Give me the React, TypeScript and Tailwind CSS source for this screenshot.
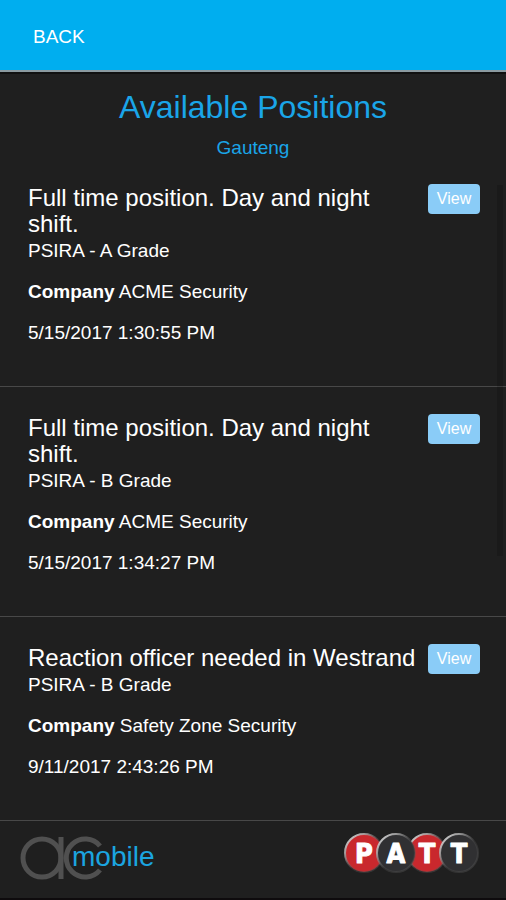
import React from "react";

type Position = {
  title: string;
  grade: string;
  company: string;
  posted: string;
};

const positions: Position[] = [
  {
    title: "Full time position. Day and night shift.",
    grade: "PSIRA - A Grade",
    company: "ACME Security",
    posted: "5/15/2017 1:30:55 PM",
  },
  {
    title: "Full time position. Day and night shift.",
    grade: "PSIRA - B Grade",
    company: "ACME Security",
    posted: "5/15/2017 1:34:27 PM",
  },
  {
    title: "Reaction officer needed in Westrand",
    grade: "PSIRA - B Grade",
    company: "Safety Zone Security",
    posted: "9/11/2017 2:43:26 PM",
  },
];

function PositionItem({ position }: { position: Position }) {
  return (
    <li className="flex items-start justify-between border-b border-[#484848] pt-7 pr-[26px] pb-10 pl-7">
      <div className="flex min-w-0 flex-1 flex-col gap-3.5 text-[19px] leading-[27px]">
        <div>
          <h2 className="text-2xl leading-[26px]">{position.title}</h2>
          <p>{position.grade}</p>
        </div>
        <p>
          <strong className="font-bold">Company</strong> {position.company}
        </p>
        <p>{position.posted}</p>
      </div>
      <button
        type="button"
        className="-mt-px ml-2 h-[30px] w-[52px] shrink-0 rounded bg-[#8accf7] text-base leading-[30px] text-white"
      >
        View
      </button>
    </li>
  );
}

function AcMobileLogo() {
  return (
    <svg width="140" height="46" viewBox="0 0 140 46" role="img" aria-label="ac mobile">
      <g fill="none" stroke="#505050" strokeWidth="5">
        <circle cx="22" cy="23" r="19" />
        <path d="M41 2V44" />
        <path d="M80 11A19 19 0 1 0 80 35" />
      </g>
      <text
        x="52"
        y="31"
        fontSize="28"
        fill="#1ba5e0"
        fontFamily="'Liberation Sans', Arial, sans-serif"
      >
        mobile
      </text>
    </svg>
  );
}

const badges = [
  { letter: "P", x: 21, fill: "#c9282d" },
  { letter: "T", x: 84, fill: "#c9282d" },
  { letter: "A", x: 53, fill: "#303032" },
  { letter: "T", x: 116, fill: "#303032" },
];

function PattLogo() {
  return (
    <svg width="138" height="42" viewBox="0 0 138 42" role="img" aria-label="PATT">
      <defs>
        <linearGradient id="rim" x1="0" y1="0" x2="1" y2="1">
          <stop offset="0" stopColor="#f4f4f4" />
          <stop offset="0.3" stopColor="#a0a0a0" stopOpacity="0.8" />
          <stop offset="0.55" stopColor="#555555" stopOpacity="0.3" />
          <stop offset="1" stopColor="#555555" stopOpacity="0.5" />
        </linearGradient>
      </defs>
      {badges.map((badge) => (
        <g key={badge.x}>
          <circle cx={badge.x} cy="21" r="19" fill={badge.fill} stroke="url(#rim)" strokeWidth="2" />
          <text
            x={badge.x}
            y="31"
            textAnchor="middle"
            fontSize="27"
            fontWeight="700"
            fontFamily="'DejaVu Sans Condensed', 'DejaVu Sans', sans-serif"
            fill="#ffffff"
            stroke="#ffffff"
            strokeWidth="1"
            strokeLinejoin="round"
          >
            {badge.letter}
          </text>
        </g>
      ))}
    </svg>
  );
}

export default function App() {
  return (
    <div className="relative flex min-h-screen flex-col bg-[#1f1f1f] font-['Liberation_Sans',Arial,sans-serif] text-white">
      <header className="border-b-2 border-[#8b9aa0] bg-[#00aeef]">
        <div className="flex h-[70px] items-center px-[33px]">
          <button type="button" className="pt-1 text-[19px] leading-6">
            BACK
          </button>
        </div>
      </header>

      <main className="border-t-2 border-[#101010]">
        <div className="pt-[13px] text-center text-[#1aa5e8]">
          <h1 className="text-[32px] leading-10">Available Positions</h1>
          <p className="pt-3 text-[19px] leading-[18px]">Gauteng</p>
        </div>
        <ul>
          {positions.map((position) => (
            <PositionItem key={position.posted} position={position} />
          ))}
        </ul>
      </main>

      <div className="absolute top-[185px] right-[3px] h-[371px] w-1.5 bg-black/15" />

      <footer className="flex flex-1 items-start justify-between border-b-2 border-[#0e0b0d] pt-[11px] pr-[25px] pl-5">
        <div className="pt-[3px]">
          <AcMobileLogo />
        </div>
        <PattLogo />
      </footer>
    </div>
  );
}
